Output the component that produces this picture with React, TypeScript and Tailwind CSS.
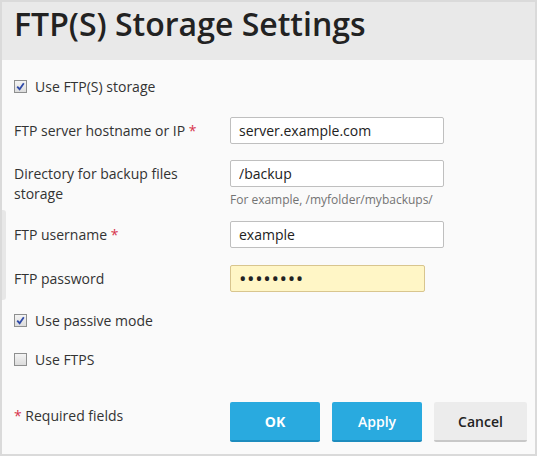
import React from "react";

function Check({ checked }: { checked: boolean }) {
  return (
    <span className="inline-flex h-[13px] w-[13px] shrink-0 items-center justify-center border border-[#8e8f8f] bg-gradient-to-b from-[#f4f4f4] to-[#dcdcdc]">
      {checked && (
        <svg width="9" height="9" viewBox="0 0 9 9">
          <path d="M1.2 4.6 L3.6 7.2 L7.8 1.2" fill="none" stroke="#2f4aa8" strokeWidth="1.8" />
        </svg>
      )}
    </span>
  );
}

function Req() {
  return <span className="text-[#d7344d]">*</span>;
}

export default function App() {
  const input =
    "h-[27px] w-[214px] rounded-[2px] border border-[#bfbfbf] bg-white px-[8px] text-[14px] text-[#222] outline-none";
  return (
    <div
      className="relative h-[456px] w-[537px] overflow-hidden border-2 border-[#dadada] bg-[#fafafa] text-[#333]"
      style={{ fontFamily: '"Open Sans", sans-serif' }}
    >
      <div className="absolute left-0 top-[208px] h-[90px] w-[4px] rounded-r-[3px] bg-[#e7e7e7]" />
      <div className="flex h-[58px] items-start bg-[#e9e9e9] pl-[12px] pt-[6px]">
        <h1 className="text-[32px] font-semibold leading-[32px] text-[#222]">FTP(S) Storage Settings</h1>
      </div>
      <div className="flex flex-col px-[12px] text-[14px]">
        <label className="mt-[16px] flex h-5 items-center gap-[8px]">
          <Check checked />
          <span>Use FTP(S) storage</span>
        </label>

        <div className="mt-[21px] flex">
          <div className="w-[216px] shrink-0 pt-[4px] leading-5">
            FTP server hostname or IP <Req />
          </div>
          <input className={input} readOnly value="server.example.com" />
        </div>

        <div className="mt-[16px] flex">
          <div className="w-[216px] shrink-0 pt-[4px] leading-5">
            Directory for backup files
            <br />
            storage
          </div>
          <div className="flex flex-col">
            <input className={input} readOnly value="/backup" />
            <div className="mt-[5px] text-[12px] leading-4 text-[#737373]">For example, /myfolder/mybackups/</div>
          </div>
        </div>

        <div className="mt-[13px] flex">
          <div className="w-[216px] shrink-0 pt-[4px] leading-5">
            FTP username <Req />
          </div>
          <input className={input} readOnly value="example" />
        </div>

        <div className="mt-[17px] flex">
          <div className="w-[216px] shrink-0 pt-[4px] leading-5">FTP password</div>
          <input
            type="password"
            className="h-[27px] w-[195px] rounded-[2px] border border-[#d8c58e] bg-[#fff6c6] px-[8px] text-[20px] tracking-[0.6px] text-[#222] outline-none"
            readOnly
            value="password"
          />
        </div>

        <label className="mt-[18px] flex h-5 items-center gap-[8px]">
          <Check checked />
          <span>Use passive mode</span>
        </label>

        <label className="mt-[19px] flex h-5 items-center gap-[8px]">
          <Check checked={false} />
          <span>Use FTPS</span>
        </label>

        <div className="mt-[33px] flex items-center">
          <div className="w-[216px] shrink-0 pb-[14px]">
            <Req /> Required fields
          </div>
          <div className="flex shrink-0 gap-[12px]">
            <button className="h-[40px] w-[90px] rounded-[2px] border-b-2 border-[#1d8cbe] bg-[#29aadf] text-[14px] font-bold text-white">
              OK
            </button>
            <button className="h-[40px] w-[90px] rounded-[2px] border-b-2 border-[#1d8cbe] bg-[#29aadf] text-[14px] font-semibold text-white">
              Apply
            </button>
            <button className="h-[40px] w-[93px] rounded-[2px] border-b-2 border-[#c8c8c8] bg-[#ececec] text-[14px] font-semibold text-[#222]">
              Cancel
            </button>
          </div>
        </div>
      </div>
    </div>
  );
}
